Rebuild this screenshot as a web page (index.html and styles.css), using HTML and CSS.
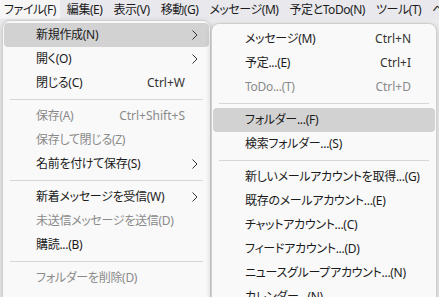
FILE: index.html
```html
<!DOCTYPE html>
<html lang="ja">
<head>
    <meta charset="UTF-8">
    <meta name="viewport" content="width=device-width, initial-scale=1.0">
    <title>ファイルメニュー</title>
    <link rel="stylesheet" href="styles.css">
</head>
<body>
    <div class="menubar">
        <span class="bar-item open">ファイル(F)</span>
        <span class="bar-item">編集(E)</span>
        <span class="bar-item">表示(V)</span>
        <span class="bar-item">移動(G)</span>
        <span class="bar-item">メッセージ(M)</span>
        <span class="bar-item">予定とToDo(N)</span>
        <span class="bar-item">ツール(T)</span>
        <span class="bar-item">ヘルプ(H)</span>
    </div>

    <div class="menus">
        <!-- File menu -->
        <div class="menu file-menu">
            <div class="item active">
                <span class="label">新規作成(N)</span>
                <span class="arrow"><svg width="6" height="10" viewBox="0 0 6 10"><polyline points="0.5,0.5 5,5 0.5,9.5"/></svg></span>
            </div>
            <div class="item">
                <span class="label">開く(O)</span>
                <span class="arrow"><svg width="6" height="10" viewBox="0 0 6 10"><polyline points="0.5,0.5 5,5 0.5,9.5"/></svg></span>
            </div>
            <div class="item">
                <span class="label">閉じる(C)</span>
                <span class="key">Ctrl+W</span>
                <span class="arrow"></span>
            </div>
            <div class="sep"></div>
            <div class="item disabled">
                <span class="label">保存(A)</span>
                <span class="key">Ctrl+Shift+S</span>
                <span class="arrow"></span>
            </div>
            <div class="item disabled">
                <span class="label">保存して閉じる(Z)</span>
                <span class="arrow"></span>
            </div>
            <div class="item">
                <span class="label">名前を付けて保存(S)</span>
                <span class="arrow"><svg width="6" height="10" viewBox="0 0 6 10"><polyline points="0.5,0.5 5,5 0.5,9.5"/></svg></span>
            </div>
            <div class="sep"></div>
            <div class="item">
                <span class="label">新着メッセージを受信(W)</span>
                <span class="arrow"><svg width="6" height="10" viewBox="0 0 6 10"><polyline points="0.5,0.5 5,5 0.5,9.5"/></svg></span>
            </div>
            <div class="item disabled">
                <span class="label">未送信メッセージを送信(D)</span>
                <span class="arrow"></span>
            </div>
            <div class="item">
                <span class="label">購読...(B)</span>
                <span class="arrow"></span>
            </div>
            <div class="sep"></div>
            <div class="item disabled">
                <span class="label">フォルダーを削除(D)</span>
                <span class="arrow"></span>
            </div>
            <div class="item last">
                <span class="label">フォルダーを圧縮(M)</span>
                <span class="arrow"></span>
            </div>
        </div>

        <!-- New submenu -->
        <div class="menu sub-menu">
            <div class="item">
                <span class="label">メッセージ(M)</span>
                <span class="key">Ctrl+N</span>
                <span class="arrow"></span>
            </div>
            <div class="item">
                <span class="label">予定...(E)</span>
                <span class="key">Ctrl+I</span>
                <span class="arrow"></span>
            </div>
            <div class="item disabled">
                <span class="label">ToDo...(T)</span>
                <span class="key">Ctrl+D</span>
                <span class="arrow"></span>
            </div>
            <div class="sep"></div>
            <div class="item active">
                <span class="label">フォルダー...(F)</span>
                <span class="arrow"></span>
            </div>
            <div class="item">
                <span class="label">検索フォルダー...(S)</span>
                <span class="arrow"></span>
            </div>
            <div class="sep"></div>
            <div class="item">
                <span class="label">新しいメールアカウントを取得...(G)</span>
                <span class="arrow"></span>
            </div>
            <div class="item">
                <span class="label">既存のメールアカウント...(E)</span>
                <span class="arrow"></span>
            </div>
            <div class="item">
                <span class="label">チャットアカウント...(C)</span>
                <span class="arrow"></span>
            </div>
            <div class="item">
                <span class="label">フィードアカウント...(D)</span>
                <span class="arrow"></span>
            </div>
            <div class="item">
                <span class="label">ニュースグループアカウント...(N)</span>
                <span class="arrow"></span>
            </div>
            <div class="item">
                <span class="label">カレンダー...(N)</span>
                <span class="arrow"></span>
            </div>
        </div>
    </div>
</body>
</html>
```

FILE: styles.css
```css
body {
    margin: 0;
    width: 439px;
    height: 297px;
    overflow: hidden;
    background: #ececee;
    font-family: "Noto Sans", "Noto Sans CJK JP", sans-serif;
    font-size: 12px;
    color: #1b1b1b;
    font-feature-settings: "palt";
}
.menubar {
    display: flex;
    gap: 3px;
    height: 20px;
    background: #e8e8ed;
    white-space: nowrap;
    overflow: hidden;
}
.bar-item {
    padding: 0 4px;
    line-height: 20px;
    height: 19px;
    letter-spacing: -0.45px;
}
.bar-item.open {
    background: #f6f6f7;
}
.menus {
    display: flex;
    align-items: flex-start;
    padding-left: 2px;
}
.menu {
    box-sizing: border-box;
    background: #f9f9f9;
    border: 1px solid #cfcfcf;
    border-radius: 8px;
    box-shadow: 0 2px 6px rgba(0, 0, 0, 0.18);
    padding: 2px 1px 40px;
    white-space: nowrap;
}
.file-menu {
    width: 209px;
}
.sub-menu {
    width: 226px;
    margin-top: 3px;
    padding-top: 3px;
}
.item {
    display: flex;
    align-items: center;
    height: 24px;
    line-height: 24px;
    padding-left: 32px;
    padding-right: 8px;
    border-radius: 4px;
}
.item.last {
    margin-top: 3px;
}
.item.active {
    background: #d2d2d2;
}
.item.disabled {
    color: #8a8a8a;
}
.label {
    flex: 1;
    letter-spacing: -0.3px;
}
.key {
    color: #333;
}
.item.disabled .key {
    color: #8a8a8a;
}
.arrow {
    width: 16px;
    display: flex;
    justify-content: flex-end;
    padding-right: 3px;
    box-sizing: border-box;
}
.arrow polyline {
    fill: none;
    stroke: #333;
    stroke-width: 1;
}
.sep {
    height: 1px;
    margin: 4px 6px;
    background: #d6d6d6;
}
```
